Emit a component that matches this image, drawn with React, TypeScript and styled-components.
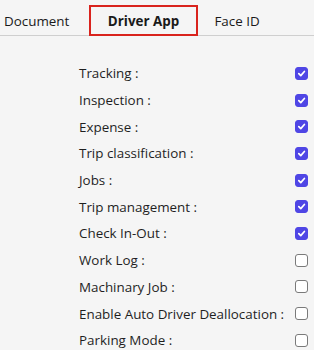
import React from 'react';
import styled, { createGlobalStyle } from 'styled-components';

const Global = createGlobalStyle`
  html, body {
    margin: 0;
    padding: 0;
    background: #f5f5f5;
    font-family: 'Open Sans', 'Noto Sans', sans-serif;
    color: #222;
  }
`;

const Page = styled.div`
  width: 314px;
  height: 350px;
  overflow: hidden;
  background: #f5f5f5;
`;

const TabBar = styled.div`
  display: flex;
  align-items: flex-end;
  height: 35px;
  border-bottom: 1px solid #cfcfcf;
  padding-left: 2px;
`;

const Tab = styled.div<{ active?: boolean; w: number; start?: boolean }>`
  box-sizing: border-box;
  height: 31px;
  display: flex;
  align-items: center;
  justify-content: ${(p) => (p.start ? 'flex-start' : 'center')};
  white-space: nowrap;
  font-size: 13.4px;
  font-weight: ${(p) => (p.active ? 700 : 400)};
  color: #1a1a1a;
  border: 2px solid ${(p) => (p.active ? '#d9231d' : 'transparent')};
  margin-bottom: -1px;
  padding-bottom: 0;
  width: ${(p) => p.w}px;
`;

const List = styled.div`
  display: flex;
  flex-direction: column;
  padding: 24px 6px 0 79px;
`;

const Row = styled.label`
  display: flex;
  align-items: center;
  justify-content: space-between;
  height: 26.7px;
  font-size: 13.4px;
  color: #1f1f1f;
`;

const Box = styled.span<{ checked?: boolean }>`
  box-sizing: border-box;
  width: 13px;
  height: 13px;
  border-radius: 3px;
  display: flex;
  align-items: center;
  justify-content: center;
  background: ${(p) => (p.checked ? '#4f46e5' : '#fff')};
  border: 1px solid ${(p) => (p.checked ? '#4f46e5' : '#7a7a7a')};
`;

const items: [string, boolean][] = [
  ['Tracking :', true],
  ['Inspection :', true],
  ['Expense :', true],
  ['Trip classification :', true],
  ['Jobs :', true],
  ['Trip management :', true],
  ['Check In-Out :', true],
  ['Work Log :', false],
  ['Machinary Job :', false],
  ['Enable Auto Driver Deallocation :', false],
  ['Parking Mode :', false],
];

export default function App() {
  return (
    <Page>
      <Global />
      <TabBar>
        <Tab w={87} start>Document</Tab>
        <Tab active w={109}>Driver App</Tab>
        <Tab w={78}>Face ID</Tab>
      </TabBar>
      <List>
        {items.map(([label, on]) => (
          <Row key={label}>
            <span>{label}</span>
            <Box checked={on}>
              {on && (
                <svg width="9" height="9" viewBox="0 0 10 10">
                  <path d="M2 5.2 L4.2 7.4 L8.2 2.8" fill="none" stroke="#fff" strokeWidth="1.9" strokeLinecap="round" strokeLinejoin="round" />
                </svg>
              )}
            </Box>
          </Row>
        ))}
      </List>
    </Page>
  );
}
